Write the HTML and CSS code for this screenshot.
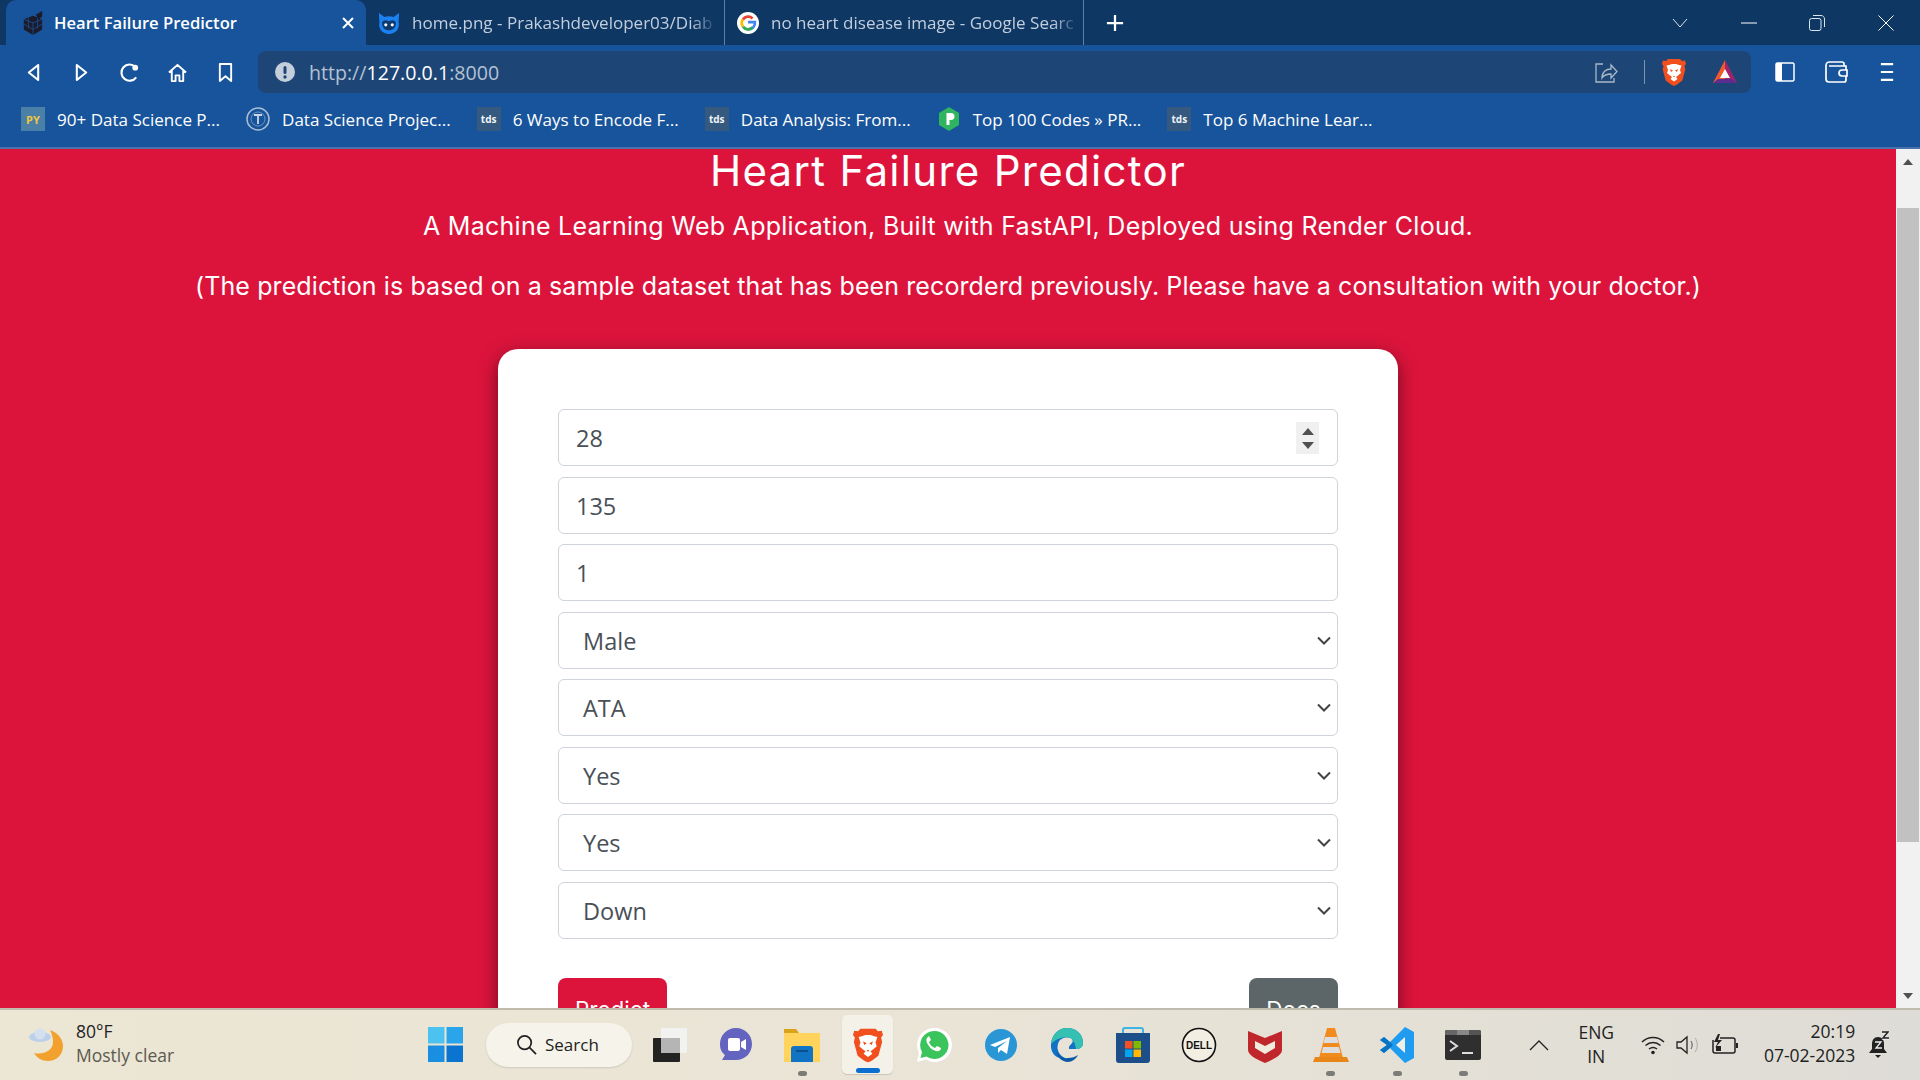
FILE: index.html
```html
<!DOCTYPE html>
<html lang="en">
<head>
    <meta charset="UTF-8">
    <meta name="viewport" content="width=device-width, initial-scale=1.0">
    <title>Heart Failure Predictor</title>
    <link rel="stylesheet" href="styles.css">
</head>
<body>
    <svg class="defs" width="0" height="0">
        <symbol id="lion" viewBox="0 0 24 28">
            <path d="M6 1h12l2 2 3-.5L24 6l-1.500 2 .8 3.500-3 11L15 26.500 12 28l-3-1.500L3.700 22.500l-3-11L1.500 8 0 6l1-3.500L4 3z" fill="#f1501e"/>
            <path d="M7 7l3-1h4l3 1 2.500.5L18 12l1 3-3 2.500-2 1.500 1.500 2L12 23.500 8.500 21l1.500-2-2-1.500L5 15l1-3-1.500-4.500z" fill="#fff"/>
            <path d="M8 11l3 1.500-2 1.500zM16 11l-3 1.500 2 1.500zM11 18h2l-1 1.500z" fill="#f1501e"/>
        </symbol>
    </svg>

    <header class="chrome">
        <div class="tabstrip">
            <div class="tab active">
                <svg class="favicon" viewBox="0 0 24 26"><path d="M2 9l10-4 10 4v11l-10 6-10-6z" fill="#1b1b2b"/><path d="M2 14l10 6 10-6M12 12v14M2 9l10 4 10-4M7 7v12M17 7v12" stroke="#17549b" stroke-width=".8" fill="none"/><path d="M15 4l7-4v6l-4 3z" fill="#1b1b2b"/></svg>
                <span class="tab-title">Heart Failure Predictor</span>
                <svg class="tab-close" viewBox="0 0 14 14"><path d="M2 2l10 10M12 2L2 12" stroke="#fff" stroke-width="2"/></svg>
            </div>
            <div class="tab">
                <svg class="favicon" viewBox="0 0 24 26"><path d="M1 2l6 4.500c3-1 7-1 10 0L23 2l-.5 10C24 20 19 25 12 25S0 20 1.500 12z" fill="#1b80f0"/><path d="M4.500 13c0-2 2-3 4-3 2 0 2 1 3.500 1s1.500-1 3.500-1c2 0 4 1 4 3 0 5-3 8-7.500 8s-7.500-3-7.500-8z" fill="#0e3a6e"/><circle cx="8.500" cy="15" r="1.700" fill="#fff"/><circle cx="15.500" cy="15" r="1.700" fill="#fff"/></svg>
                <span class="tab-title fade">home.png - Prakashdeveloper03/Diab</span>
            </div>
            <div class="tab">
                <svg class="favicon" viewBox="0 0 24 24"><circle cx="12" cy="12" r="12" fill="#fff"/><path d="M12 11h7.500c.5 4.500-2.500 8-7.500 8" fill="none" stroke="#4285f4" stroke-width="3"/><path d="M17 17a7 7 0 0 1-10.500-1" fill="none" stroke="#34a853" stroke-width="3"/><path d="M6.500 16a7 7 0 0 1 0-8" fill="none" stroke="#fbbc05" stroke-width="3"/><path d="M6.500 8a7 7 0 0 1 10.500-1" fill="none" stroke="#ea4335" stroke-width="3"/></svg>
                <span class="tab-title fade">no heart disease image - Google Searc</span>
            </div>
            <svg class="new-tab" viewBox="0 0 20 20"><path d="M10 1v18M1 10h18" stroke="#fff" stroke-width="2.500"/></svg>
            <div class="window-controls">
                <span class="win-btn"><svg viewBox="0 0 16 10" width="16" height="10"><path d="M1 1l7 8 7-8" fill="none" stroke="#dbe4ef"/></svg></span>
                <span class="win-btn"><svg viewBox="0 0 16 2" width="16" height="2"><path d="M0 1h16" stroke="#fff"/></svg></span>
                <span class="win-btn"><svg viewBox="0 0 16 16" width="16" height="16"><rect x=".5" y="3.500" width="11.500" height="12" rx="2" fill="none" stroke="#dbe4ef"/><path d="M4 .5h8c2 0 3.500 1.500 3.500 3.500v8" fill="none" stroke="#dbe4ef"/></svg></span>
                <span class="win-btn"><svg viewBox="0 0 16 16" width="16" height="16"><path d="M.5.5l15 15M15.500.5l-15 15" stroke="#fff"/></svg></span>
            </div>
        </div>

        <div class="toolbar">
            <span class="nav-btn"><svg viewBox="0 0 16 20" width="15" height="19"><path d="M13 2v16L3 10z" fill="none" stroke="#fff" stroke-width="2.200" stroke-linejoin="round"/></svg></span>
            <span class="nav-btn"><svg viewBox="0 0 16 20" width="15" height="19"><path d="M3 2v16l10-8z" fill="none" stroke="#fff" stroke-width="2.200" stroke-linejoin="round"/></svg></span>
            <span class="nav-btn"><svg viewBox="0 0 22 22" width="21" height="21"><path d="M18 16a8.500 8.500 0 1 1-1-11" fill="none" stroke="#fff" stroke-width="2.200"/><circle cx="17" cy="6" r="3" fill="#fff"/></svg></span>
            <span class="nav-btn"><svg viewBox="0 0 22 22" width="21" height="21"><path d="M2 11l9-8 9 8M5 9v11h4v-6h4v6h4V9" fill="none" stroke="#fff" stroke-width="2" stroke-linejoin="round"/></svg></span>
            <span class="nav-btn"><svg viewBox="0 0 18 22" width="17" height="21"><path d="M3 2h12v18l-6-5-6 5z" fill="none" stroke="#fff" stroke-width="2" stroke-linejoin="round"/></svg></span>
            <div class="address-bar">
                <svg class="info-icon" viewBox="0 0 20 20"><circle cx="10" cy="10" r="10" fill="#c5cfdb"/><rect x="8.500" y="4" width="3" height="8" rx="1.500" fill="#1d4677"/><circle cx="10" cy="15" r="1.700" fill="#1d4677"/></svg>
                <span class="url"><span class="dim">http://</span>127.0.0.1<span class="dim">:8000</span></span>
                <div class="address-right">
                    <svg class="share" viewBox="0 0 24 24"><path d="M9 4H2v18h18v-4M8 18c0-6 4-9 9-9V5l6 6.500-6 6.500v-4c-4 0-7 1-9 4z" fill="none" stroke="#aab8c9" stroke-width="1.300"/></svg>
                    <span class="addr-sep"></span>
                    <svg class="brave-shield"><use href="#lion"/></svg>
                    <svg class="bat" viewBox="0 0 26 26"><path d="M13 1L1 24h12z" fill="#f0592b"/><path d="M13 1l12 23H13z" fill="#a3236b"/><path d="M1 24l5-4h14l5 4z" fill="#5a2d8e"/><path d="M13 10l5 9H8z" fill="#fff"/></svg>
                </div>
            </div>
            <div class="toolbar-right">
                <span class="tool-btn"><svg viewBox="0 0 20 20" width="20" height="20"><rect x="1" y="1" width="18" height="18" rx="1.500" fill="none" stroke="#fff" stroke-width="1.500"/><rect x="1" y="1" width="6" height="18" fill="#fff"/></svg></span>
                <span class="tool-btn"><svg viewBox="0 0 24 22" width="24" height="22"><path d="M20 5V3a2 2 0 0 0-2-2H5C3 1 2 3 2 5v13c0 2 1 3 3 3h15a2 2 0 0 0 2-2V15M22 9V5H5" fill="none" stroke="#fff" stroke-width="1.700"/><path d="M23 9h-5a3 3 0 0 0 0 6h5z" fill="#17549b" stroke="#fff" stroke-width="1.700"/></svg></span>
                <span class="tool-btn"><svg viewBox="0 0 16 22" width="14" height="22"><path d="M1 2h14M1 11h14M1 20h14" stroke="#fff" stroke-width="2.400"/></svg></span>
            </div>
        </div>

        <nav class="bookmarks">
            <a class="bookmark"><span class="bm-icon py">PY</span>90+ Data Science P...</a>
            <a class="bookmark"><svg class="bm-svg" viewBox="0 0 24 24"><circle cx="12" cy="12" r="11" fill="none" stroke="#a9bdd6" stroke-width="1.500"/><circle cx="12" cy="12" r="7" fill="none" stroke="#6f93bd"/><path d="M8 8h8M12 8v9" stroke="#c9d6e6" stroke-width="1.800"/></svg>Data Science Projec...</a>
            <a class="bookmark"><span class="bm-icon tds">tds</span>6 Ways to Encode F...</a>
            <a class="bookmark"><span class="bm-icon tds">tds</span>Data Analysis: From...</a>
            <a class="bookmark"><svg class="bm-svg" viewBox="0 0 24 24"><path d="M12 0l10 6v12l-10 6-10-6V6z" fill="#2fb45f"/><path d="M9.500 6h4.500a3 3 0 0 1 0 7h-1.500v5h-3z" fill="#fff"/></svg>Top 100 Codes » PR...</a>
            <a class="bookmark"><span class="bm-icon tds">tds</span>Top 6 Machine Lear...</a>
        </nav>
    </header>

    <div class="viewport">
        <main class="page">
            <h1>Heart Failure Predictor</h1>
            <p class="lead">A Machine Learning Web Application, Built with FastAPI, Deployed using Render Cloud.</p>
            <p class="lead note">(The prediction is based on a sample dataset that has been recorderd previously. Please have a consultation with your doctor.)</p>

            <div class="card">
                <div class="fields">
                    <div class="field num">28
                        <span class="spinner">
                            <svg viewBox="0 0 12 7" width="12" height="7"><path d="M6 0l6 7H0z" fill="#505050"/></svg>
                            <svg viewBox="0 0 12 7" width="12" height="7"><path d="M0 0h12L6 7z" fill="#505050"/></svg>
                        </span>
                    </div>
                    <div class="field num">135</div>
                    <div class="field num">1</div>
                    <div class="field select">Male<svg class="chevron" viewBox="0 0 14 9"><path d="M1 1.500l6 6 6-6" fill="none" stroke="#444" stroke-width="2"/></svg></div>
                    <div class="field select">ATA<svg class="chevron" viewBox="0 0 14 9"><path d="M1 1.500l6 6 6-6" fill="none" stroke="#444" stroke-width="2"/></svg></div>
                    <div class="field select">Yes<svg class="chevron" viewBox="0 0 14 9"><path d="M1 1.500l6 6 6-6" fill="none" stroke="#444" stroke-width="2"/></svg></div>
                    <div class="field select">Yes<svg class="chevron" viewBox="0 0 14 9"><path d="M1 1.500l6 6 6-6" fill="none" stroke="#444" stroke-width="2"/></svg></div>
                    <div class="field select">Down<svg class="chevron" viewBox="0 0 14 9"><path d="M1 1.500l6 6 6-6" fill="none" stroke="#444" stroke-width="2"/></svg></div>
                </div>
                <div class="actions">
                    <button class="btn predict">Predict</button>
                    <button class="btn docs">Docs</button>
                </div>
            </div>
        </main>
        <aside class="scrollbar">
            <svg viewBox="0 0 10 6" width="10" height="6"><path d="M5 0l5 6H0z" fill="#505050"/></svg>
            <div class="scroll-track"><div class="scroll-thumb"></div></div>
            <svg viewBox="0 0 10 6" width="10" height="6"><path d="M0 0h10L5 6z" fill="#505050"/></svg>
        </aside>
    </div>

    <footer class="taskbar">
        <div class="weather">
            <svg class="weather-icon" viewBox="0 0 36 36"><path d="M22 3c8 3 13 9 13 16 0 9-7 15-15 15-6 0-11-3-14-8 9 2 19-2 19-11 0-4-1-8-3-12z" fill="#f2a12e"/><ellipse cx="12" cy="10" rx="11" ry="5" fill="#bcd0ea"/><circle cx="12" cy="7" r="5.500" fill="#d4e0f0"/></svg>
            <div class="weather-text">
                <div>80°F</div>
                <div class="muted">Mostly clear</div>
            </div>
        </div>
        <svg class="start" viewBox="0 0 35 35"><rect width="16.500" height="16.500" fill="#4cc2f1"/><rect x="18.500" width="16.500" height="16.500" fill="#2aa4ea"/><rect y="18.500" width="16.500" height="16.500" fill="#1a8ee0"/><rect x="18.500" y="18.500" width="16.500" height="16.500" fill="#0a74d0"/></svg>
        <div class="search">
            <svg viewBox="0 0 22 22" width="21" height="21"><circle cx="9" cy="9" r="7" fill="none" stroke="#222" stroke-width="1.800"/><path d="M14 14l7 7" stroke="#222" stroke-width="1.800"/></svg>
            Search
        </div>
        <div class="apps">
            <span class="app"><svg viewBox="0 0 36 36"><rect x="9" y="1" width="26" height="25" rx="1" fill="#f2f2f0"/><rect x="1" y="11" width="27" height="24" rx="1" fill="#222"/><rect x="9" y="11" width="19" height="15" fill="#b5b5b5"/></svg></span>
            <span class="app"><svg viewBox="0 0 36 36"><path d="M18 1c9 0 16 7 16 16s-7 16-16 16H4l3-5C3 25 2 21 2 17 2 8 9 1 18 1z" fill="#6264c0"/><rect x="10" y="11" width="12" height="13" rx="2" fill="#fff"/><path d="M23 15l5-3v11l-5-3z" fill="#fff"/></svg></span>
            <span class="app"><svg viewBox="0 0 36 36"><path d="M0 2h12l3 4h21v29H0z" fill="#ffd35c"/><path d="M0 2h12l3 4H0z" fill="#d9a21b"/><path d="M7 30v-8a3 3 0 0 1 3-3h16a3 3 0 0 1 3 3v13H7z" fill="#1073c4"/><path d="M12 24h12" stroke="#0c4f8c" stroke-width="2"/></svg><i class="dot"></i></span>
            <span class="app current"><svg viewBox="0 0 24 28" width="30" height="36"><use href="#lion"/></svg><i class="underline"></i></span>
            <span class="app"><svg viewBox="0 0 36 36"><path d="M18 1a17 17 0 0 0-15 25L1 35l9-2.500A17 17 0 1 0 18 1z" fill="#fff"/><path d="M18 4a14 14 0 0 0-12 21l-1.500 6 6-1.500A14 14 0 1 0 18 4z" fill="#3bc45c"/><path d="M12 10c-2 1-2 4-1 6 2 4 5 7 9 8 3 1 5-1 5-3l-4-2-2 2c-3-1-5-3-6-6l2-2-2-4z" fill="#fff"/></svg></span>
            <span class="app"><svg viewBox="0 0 36 36"><circle cx="18" cy="18" r="16" fill="#2a96d6"/><path d="M7 18l20-8-3 17-6-4-3 3v-5l9-7-12 6z" fill="#fff"/></svg></span>
            <span class="app"><svg viewBox="0 0 36 36"><path d="M2 17C3 7 10 1 18 1c9 0 16 6 16 15 0 4-3 6-7 6h-7c-1-5 6-5 3-10-2-2-12-3-14 5-2 6 2 12 7 14-8 2-15-5-14-14z" fill="#1372c4"/><path d="M18 1c9 0 16 6 16 15 0 4-3 6-7 6-1-7-4-12-9-12-5 0-11 2-16 7C3 7 10 1 18 1z" fill="#35c1b1"/><path d="M19 35c-6 0-12-5-12-14 0 6 6 11 12 10 4 0 7-1 10-3-2 4-6 7-10 7z" fill="#0c59a4"/></svg></span>
            <span class="app"><svg viewBox="0 0 36 36"><path d="M8 8V3a2 2 0 0 1 2-2h16a2 2 0 0 1 2 2v5" fill="none" stroke="#3cb4e5" stroke-width="2"/><path d="M1 6h34v27a3 3 0 0 1-3 3H4a3 3 0 0 1-3-3z" fill="#1c4e8a"/><rect x="10" y="14" width="7.500" height="7.500" fill="#f25022"/><rect x="18.500" y="14" width="7.500" height="7.500" fill="#7fba00"/><rect x="10" y="22.500" width="7.500" height="7.500" fill="#00a4ef"/><rect x="18.500" y="22.500" width="7.500" height="7.500" fill="#ffb900"/></svg></span>
            <span class="app"><svg viewBox="0 0 36 36"><circle cx="18" cy="18" r="16.500" fill="#f2eee2" stroke="#111" stroke-width="1.600"/><text x="18" y="22" text-anchor="middle" class="dell">DELL</text></svg></span>
            <span class="app"><svg viewBox="0 0 36 36"><path d="M1 4l17 7 17-7v19c0 5-8 9-17 13C9 32 1 28 1 23z" fill="#c0272d"/><path d="M8 14l10 5 10-5v7l-10 6-10-6z" fill="#efebdd"/></svg></span>
            <span class="app"><svg viewBox="0 0 36 36"><path d="M14 1h8l8 30H6z" fill="#f28b1e"/><path d="M12 10h12l1.500 6h-15zM10 20h16l1.500 6h-19z" fill="#ddd"/><path d="M2 30h32l2 5H0z" fill="#e8861a"/></svg><i class="dot"></i></span>
            <span class="app"><svg viewBox="0 0 36 36"><path d="M26 0l9 5v26l-9 5L11 21l-6 5-4-3 7-5-7-5 4-3 6 5z" fill="#1f9cf0"/><path d="M26 10l-9 8 9 8z" fill="#eef0e8"/><path d="M11 15L5 10l-4 3 7 5-7 5 4 3 6-5 3-3z" fill="#0a74c4"/></svg><i class="dot"></i></span>
            <span class="app"><svg viewBox="0 0 36 30" width="36" height="30"><rect width="36" height="30" rx="2" fill="#2f2f2f"/><path d="M0 2a2 2 0 0 1 2-2h10v5H0z" fill="#666"/><path d="M12 0h12v5H12z" fill="#888"/><path d="M24 0h10a2 2 0 0 1 2 2v3H24z" fill="#555"/><path d="M5 11l7 5-7 5" fill="none" stroke="#ddd" stroke-width="2"/><path d="M17 23h11" stroke="#ddd" stroke-width="2"/></svg><i class="dot"></i></span>
        </div>
        <div class="tray">
            <svg class="tray-chevron" viewBox="0 0 20 12"><path d="M1 11l9-9 9 9" fill="none" stroke="#222" stroke-width="1.300"/></svg>
            <div class="lang">ENG<br>IN</div>
            <svg class="wifi" viewBox="0 0 24 20"><path d="M1 7c6-6 16-6 22 0M4.500 10.500c4.500-4 10.500-4 15 0M8 14c2.500-2 5.500-2 8 0" fill="none" stroke="#222" stroke-width="1.500"/><circle cx="12" cy="17.500" r="1.800" fill="#222"/></svg>
            <svg class="speaker" viewBox="0 0 24 20"><path d="M1 7h4l6-5v16l-6-5H1z" fill="none" stroke="#222" stroke-width="1.300"/><path d="M15 6c1.500 2 1.500 6 0 8" fill="none" stroke="#555"/><path d="M19 3c3 4 3 10 0 14" fill="none" stroke="#aaa"/></svg>
            <svg class="battery" viewBox="0 0 26 24"><path d="M8 5h13a2 2 0 0 1 2 2v11a2 2 0 0 1-2 2H3a2 2 0 0 1-2-2V7" fill="none" stroke="#222" stroke-width="1.500"/><path d="M24 10h2v5h-2z" fill="#222"/><path d="M6 1L2 9h4l-3 6 7-8H6l2-6z" fill="#222"/><path d="M4 13h5v5H4z" fill="#222"/></svg>
            <div class="clock">20:19<br>07-02-2023</div>
            <svg class="bell" viewBox="0 0 22 28"><path d="M11 6c-4 0-6 3-6 7v5l-3 4h18l-3-4v-5c0-4-2-7-6-7z" fill="#222"/><path d="M8 24h6l-3 3z" fill="#222"/><path d="M8 11h6l-5 6h6M15 2h6l-5 6h6" fill="none" stroke="#eee" stroke-width="1.300"/><path d="M15 1h6l-5 6h6" fill="none" stroke="#222" stroke-width="1.500"/></svg>
        </div>
    </footer>
</body>
</html>
```

FILE: styles.css
```css
* {
    margin: 0;
    padding: 0;
    box-sizing: border-box;
}

html, body {
    height: 100%;
}

body {
    display: flex;
    flex-direction: column;
    height: 100vh;
    overflow: hidden;
    font-family: "Open Sans", "Noto Sans", sans-serif;
    background: #dc143c;
}

.defs {
    position: absolute;
}

/* browser chrome */
.chrome {
    flex: none;
    background: #17549b;
    border-bottom: 2px solid #4c72ad;
    color: #fff;
}

.tabstrip {
    display: flex;
    align-items: center;
    height: 45px;
    padding-left: 6px;
    background: #0f3764;
}

.tab {
    display: flex;
    align-items: center;
    width: 359px;
    height: 45px;
    padding-left: 12px;
    border-right: 1px solid #5d7ea6;
    color: #c2cedd;
    font-size: 17.050px;
}

.tab.active {
    width: 360px;
    padding: 0 11px 0 16px;
    background: #17549b;
    border-right: none;
    border-radius: 10px 10px 0 0;
    color: #fff;
    font-size: 16.600px;
    font-weight: 600;
}

.favicon {
    flex: none;
    width: 22px;
    height: 24px;
}

.tab-title {
    margin-left: 12px;
    white-space: nowrap;
}

.tab.active .tab-title {
    margin-left: 10px;
}

.fade {
    -webkit-mask-image: linear-gradient(to right, #000 93%, rgba(0, 0, 0, 0.2));
    mask-image: linear-gradient(to right, #000 93%, rgba(0, 0, 0, 0.2));
}

.tab-close {
    width: 14px;
    height: 14px;
    margin-left: auto;
}

.new-tab {
    width: 18px;
    height: 18px;
    margin-left: 22px;
}

.window-controls {
    display: flex;
    margin-left: auto;
}

.win-btn {
    display: flex;
    align-items: center;
    justify-content: center;
    width: 68.500px;
    height: 45px;
}

.toolbar {
    display: flex;
    align-items: center;
    height: 54px;
    padding: 6px 0 6px 9px;
}

.nav-btn {
    display: flex;
    align-items: center;
    justify-content: center;
    width: 48px;
}

.address-bar {
    display: flex;
    align-items: center;
    width: 1493px;
    height: 42px;
    margin-left: 9px;
    padding: 0 13px 0 17px;
    background: #1d4677;
    border-radius: 8px;
}

.info-icon {
    width: 20px;
    height: 20px;
}

.url {
    margin-left: 14px;
    font-size: 19.600px;
    color: #fff;
}

.dim {
    color: #b4c2d3;
}

.address-right {
    display: flex;
    align-items: center;
    margin-left: auto;
}

.share {
    width: 24px;
    height: 24px;
}

.addr-sep {
    width: 1px;
    height: 24px;
    margin: 0 17px 0 26px;
    background: #7f94ae;
}

.brave-shield {
    width: 24px;
    height: 28px;
}

.bat {
    width: 26px;
    height: 26px;
    margin-left: 26px;
}

.toolbar-right {
    display: flex;
    margin-left: 8px;
}

.tool-btn {
    display: flex;
    align-items: center;
    justify-content: center;
    width: 51px;
}

.bookmarks {
    display: flex;
    align-items: center;
    gap: 26px;
    height: 48px;
    padding: 0 0 8px 21px;
}

.bookmark {
    display: flex;
    align-items: center;
    gap: 12px;
    font-size: 17.050px;
    white-space: nowrap;
}

.bm-icon {
    display: flex;
    align-items: center;
    justify-content: center;
    width: 24px;
    height: 24px;
    font-size: 10px;
    font-weight: 700;
}

.py {
    background: #4a7fa8;
    color: #f0c63f;
    font-size: 11px;
}

.tds {
    background: #35597f;
    color: #f0f4f8;
}

.bm-svg {
    width: 24px;
    height: 24px;
}

/* page content */
.viewport {
    flex: 1;
    display: flex;
    min-height: 0;
}

.page {
    flex: 1;
    overflow: hidden;
    background: #dc143c;
    color: #fff;
    font-family: Inter, "Open Sans", sans-serif;
    text-align: center;
}

h1 {
    height: 44px;
    margin-bottom: 15px;
    font-size: 42px;
    font-weight: 400;
    line-height: 44px;
    letter-spacing: 1.300px;
}

.lead {
    height: 36px;
    font-size: 25px;
    line-height: 36px;
    letter-spacing: 0.270px;
}

.note {
    margin-top: 24px;
    letter-spacing: 0.100px;
}

.card {
    width: 900px;
    margin: 45px auto 0;
    padding: 60px 60px 40px;
    background: #fff;
    border-radius: 20px;
    box-shadow: 0 6px 18px rgba(0, 0, 0, 0.5);
    font-family: "Open Sans", sans-serif;
}

.fields {
    display: flex;
    flex-direction: column;
    gap: 10.500px;
}

.field {
    position: relative;
    display: flex;
    align-items: center;
    height: 57px;
    padding: 1px 0 0 17px;
    border: 1px solid #ced4da;
    border-radius: 6px;
    color: #495057;
    font-size: 23.500px;
    text-align: left;
}

.field.select {
    padding-left: 24px;
}

.chevron {
    position: absolute;
    right: 6px;
    top: 23px;
    width: 14px;
    height: 9px;
}

.spinner {
    position: absolute;
    right: 18px;
    top: 12px;
    display: flex;
    flex-direction: column;
    align-items: center;
    justify-content: center;
    gap: 7px;
    width: 23px;
    height: 32px;
    background: #f0f0f0;
}

.actions {
    display: flex;
    justify-content: space-between;
    margin-top: 39.500px;
}

.btn {
    height: 64px;
    padding: 14px 0;
    border: none;
    border-radius: 8px;
    color: #fff;
    font-family: Inter, sans-serif;
    font-size: 22.500px;
    line-height: 36px;
}

.predict {
    width: 109px;
    background: #dc143c;
}

.docs {
    width: 89px;
    background: #5c6668;
}

.scrollbar {
    flex: none;
    display: flex;
    flex-direction: column;
    align-items: center;
    width: 24px;
    padding: 10px 0 9px;
    background: #f1f1f1;
}

.scroll-track {
    flex: 1;
    width: 100%;
    padding-top: 43px;
}

.scroll-thumb {
    width: 22px;
    height: 634px;
    margin: 0 auto;
    background: #c1c1c1;
}

/* windows taskbar */
.taskbar {
    flex: none;
    display: flex;
    align-items: center;
    height: 72px;
    padding-bottom: 1px;
    border-top: 2px solid #bfbcae;
    background: linear-gradient(to right, #ece6d4, #e9e4d6 50%, #dedcd6);
    color: #222;
}

.weather {
    display: flex;
    align-items: center;
    gap: 12px;
    width: 428px;
    padding-left: 28px;
    font-size: 17.500px;
    line-height: 24px;
}

.weather-icon {
    width: 36px;
    height: 36px;
}

.weather-text {
    padding-bottom: 4px;
}

.muted {
    color: #5c5a50;
}

.start {
    width: 35px;
    height: 35px;
}

.search {
    display: flex;
    align-items: center;
    gap: 8px;
    width: 146px;
    height: 44px;
    margin-left: 23px;
    padding-left: 30px;
    background: #f6f3ea;
    border-radius: 22px;
    box-shadow: 0 1px 2px rgba(0, 0, 0, 0.12);
    font-size: 17px;
}

.apps {
    display: flex;
    margin-left: 5px;
}

.app {
    position: relative;
    display: flex;
    align-items: center;
    justify-content: center;
    width: 66.100px;
    height: 69px;
}

.app svg {
    width: 36px;
    height: 36px;
}

.app .dell {
    font-family: "Liberation Sans", sans-serif;
    font-size: 10px;
    font-weight: 700;
    fill: #111;
}

.app.current::before {
    content: "";
    position: absolute;
    left: 7px;
    top: 5px;
    width: 51px;
    height: 59px;
    background: #f4f1e9;
    border-radius: 5px;
    box-shadow: 0 1px 1px rgba(0, 0, 0, 0.15);
}

.app.current svg {
    position: relative;
    width: 30px;
}

.dot {
    position: absolute;
    left: 50%;
    bottom: 3px;
    width: 9px;
    height: 5px;
    margin-left: -4.500px;
    background: #7b7b78;
    border-radius: 3px;
}

.underline {
    position: absolute;
    left: 50%;
    bottom: 6px;
    width: 24px;
    height: 5px;
    margin-left: -12px;
    background: #0a6fd0;
    border-radius: 3px;
}

.tray {
    display: flex;
    align-items: center;
    padding-left: 33px;
    font-size: 17.500px;
    line-height: 24px;
}

.tray-chevron {
    width: 20px;
    height: 12px;
}

.lang {
    width: 50px;
    margin-left: 22px;
    padding-bottom: 1px;
    text-align: center;
}

.wifi {
    width: 24px;
    height: 20px;
    margin-left: 20px;
}

.speaker {
    width: 24px;
    height: 20px;
    margin-left: 11px;
}

.battery {
    width: 26px;
    height: 24px;
    margin-left: 12px;
}

.clock {
    width: 110px;
    margin-left: 7px;
    padding-bottom: 3px;
    text-align: right;
}

.bell {
    width: 22px;
    height: 28px;
    margin-left: 12px;
}
```
